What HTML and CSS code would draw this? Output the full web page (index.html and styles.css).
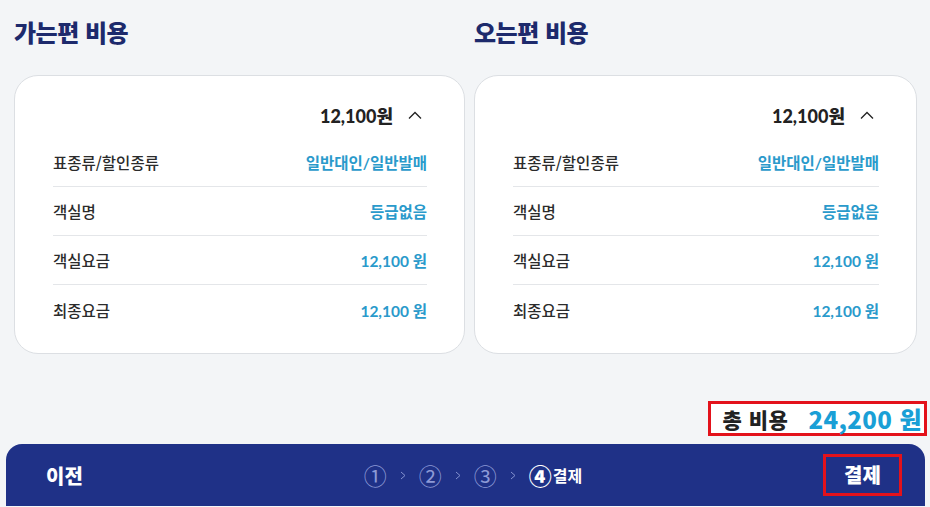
FILE: index.html
```html
<!DOCTYPE html>
<html lang="ko">
<head>
    <meta charset="UTF-8">
    <meta name="viewport" content="width=device-width, initial-scale=1.0">
    <title>결제 - 운임 확인</title>
    <link rel="stylesheet" href="styles.css">
</head>
<body>
    <div class="trips">
        <section class="trip">
            <h2 class="trip-title">가는편 비용</h2>
            <div class="fare-card">
                <div class="fare-amount">
                    <span>12,100원</span>
                    <svg class="caret" width="14" height="8" viewBox="0 0 14 8"><path d="M1 7.5 L7 1.5 L13 7.5" fill="none" stroke="#222" stroke-width="1.3"/></svg>
                </div>
                <div class="fare-row"><span class="fare-label">표종류/할인종류</span><span class="fare-value">일반대인/일반발매</span></div>
                <div class="fare-row"><span class="fare-label">객실명</span><span class="fare-value">등급없음</span></div>
                <div class="fare-row"><span class="fare-label">객실요금</span><span class="fare-value">12,100 원</span></div>
                <div class="fare-row"><span class="fare-label">최종요금</span><span class="fare-value">12,100 원</span></div>
            </div>
        </section>
        <section class="trip">
            <h2 class="trip-title">오는편 비용</h2>
            <div class="fare-card">
                <div class="fare-amount">
                    <span>12,100원</span>
                    <svg class="caret" width="14" height="8" viewBox="0 0 14 8"><path d="M1 7.5 L7 1.5 L13 7.5" fill="none" stroke="#222" stroke-width="1.3"/></svg>
                </div>
                <div class="fare-row"><span class="fare-label">표종류/할인종류</span><span class="fare-value">일반대인/일반발매</span></div>
                <div class="fare-row"><span class="fare-label">객실명</span><span class="fare-value">등급없음</span></div>
                <div class="fare-row"><span class="fare-label">객실요금</span><span class="fare-value">12,100 원</span></div>
                <div class="fare-row"><span class="fare-label">최종요금</span><span class="fare-value">12,100 원</span></div>
            </div>
        </section>
    </div>

    <div class="total-line">
        <div class="total-box">
            <span class="total-label">총 비용</span>
            <span class="total-value">24,200 원</span>
        </div>
    </div>

    <nav class="bottom-bar">
        <a href="#" class="nav-prev">이전</a>
        <div class="steps">
            <span class="step">①</span>
            <svg class="step-sep" width="6" height="9" viewBox="0 0 6 9"><path d="M1 1 L5 4.5 L1 8" fill="none" stroke="#8391cf" stroke-width="1"/></svg>
            <span class="step">②</span>
            <svg class="step-sep" width="6" height="9" viewBox="0 0 6 9"><path d="M1 1 L5 4.5 L1 8" fill="none" stroke="#8391cf" stroke-width="1"/></svg>
            <span class="step">③</span>
            <svg class="step-sep" width="6" height="9" viewBox="0 0 6 9"><path d="M1 1 L5 4.5 L1 8" fill="none" stroke="#8391cf" stroke-width="1"/></svg>
            <span class="step step-current">④<span class="step-name">결제</span></span>
        </div>
        <div class="nav-right">
            <a href="#" class="nav-pay">결제</a>
        </div>
    </nav>
</body>
</html>
```

FILE: styles.css
```css
body {
    margin: 0;
    background: #f3f5f7;
    font-family: "Noto Sans CJK KR", "Noto Sans", sans-serif;
    color: #222;
    overflow: hidden;
}

.trips {
    display: grid;
    grid-template-columns: 451px 443px;
    column-gap: 9px;
    padding-left: 14px;
}

.trip-title {
    margin: 12px 0 23px;
    height: 40px;
    line-height: 40px;
    font-size: 24px;
    font-weight: 900;
    color: #1d2a6c;
    letter-spacing: -0.5px;
}

.fare-card {
    background: white;
    border: 1px solid #dcdfe3;
    border-radius: 24px;
    padding: 21px 37px 19px 38px;
}

.fare-amount {
    display: flex;
    justify-content: flex-end;
    align-items: center;
    height: 36px;
    padding-right: 5px;
    margin-bottom: 5px;
    font-family: Lato, "Noto Sans CJK KR", sans-serif;
    font-size: 18px;
    font-weight: 900;
    color: #222;
}

.caret {
    margin-left: 15px;
}

.fare-row {
    display: flex;
    justify-content: space-between;
    align-items: center;
    height: 48px;
    border-bottom: 1px solid #e4e6e9;
    font-size: 15.5px;
}

.fare-row:last-child {
    border-bottom: none;
    height: 49px;
}

.fare-label {
    color: #2b2b2b;
    font-weight: 500;
}

.fare-value {
    font-family: Lato, "Noto Sans CJK KR", sans-serif;
    font-weight: bold;
    color: #2a9acb;
}

.total-line {
    display: flex;
    justify-content: flex-end;
    padding-right: 3px;
    margin-top: 47px;
}

.total-box {
    display: flex;
    align-items: center;
    gap: 20px;
    height: 29px;
    padding: 0 2px 0 12px;
    border: 3px solid #e3121b;
    background: white;
}

.total-label {
    font-size: 21px;
    font-weight: 900;
    color: #222;
    letter-spacing: 0.5px;
}

.total-value {
    font-size: 24px;
    font-weight: 900;
    color: #1a9fd6;
    letter-spacing: 0.4px;
}

.bottom-bar {
    display: grid;
    grid-template-columns: 1fr auto 1fr;
    align-items: center;
    height: 62px;
    margin: 8px 5px 0 6px;
    padding: 0 23px 0 40px;
    background: #1f3187;
    border-radius: 16px 16px 0 0;
}

.nav-prev {
    color: white;
    text-decoration: none;
    font-size: 20px;
    font-weight: 900;
}

.steps {
    display: flex;
    align-items: center;
    gap: 13px;
    padding-right: 2px;
}

.step {
    font-size: 23px;
    line-height: 1;
    color: #8d9ad6;
}

.step-current {
    display: flex;
    align-items: center;
    color: white;
    font-weight: 900;
}

.step-name {
    font-size: 16px;
    font-weight: bold;
    margin-left: 1px;
}

.nav-right {
    display: flex;
    justify-content: flex-end;
}

.nav-pay {
    display: block;
    width: 73px;
    height: 36px;
    line-height: 36px;
    text-align: center;
    border: 3px solid #e3121b;
    color: white;
    text-decoration: none;
    font-size: 20px;
    font-weight: 900;
}
```
